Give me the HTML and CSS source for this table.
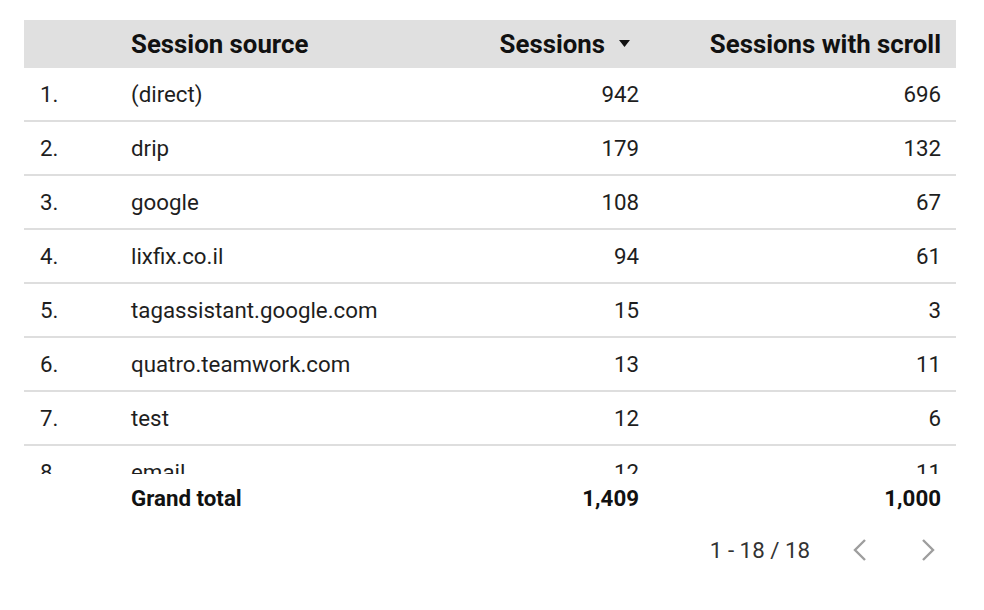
FILE: index.html
```html
<!DOCTYPE html>
<html>
<head>
<meta charset="utf-8">
<link rel="stylesheet" href="styles.css">
</head>
<body>
<div class="table">
  <div class="row head">
    <div class="c idx"></div>
    <div class="c src">Session source</div>
    <div class="c num s1">Sessions <svg class="sort" width="11" height="7" viewBox="0 0 11 7"><path d="M0 0H11L5.5 7Z" fill="#111"/></svg></div>
    <div class="c num s2">Sessions with scroll</div>
  </div>
  <div class="body">
    <div class="row"><div class="c idx">1.</div><div class="c src">(direct)</div><div class="c num s1">942</div><div class="c num s2">696</div></div>
    <div class="row"><div class="c idx">2.</div><div class="c src">drip</div><div class="c num s1">179</div><div class="c num s2">132</div></div>
    <div class="row"><div class="c idx">3.</div><div class="c src">google</div><div class="c num s1">108</div><div class="c num s2">67</div></div>
    <div class="row"><div class="c idx">4.</div><div class="c src">lixfix.co.il</div><div class="c num s1">94</div><div class="c num s2">61</div></div>
    <div class="row"><div class="c idx">5.</div><div class="c src">tagassistant.google.com</div><div class="c num s1">15</div><div class="c num s2">3</div></div>
    <div class="row"><div class="c idx">6.</div><div class="c src">quatro.teamwork.com</div><div class="c num s1">13</div><div class="c num s2">11</div></div>
    <div class="row"><div class="c idx">7.</div><div class="c src">test</div><div class="c num s1">12</div><div class="c num s2">6</div></div>
    <div class="row"><div class="c idx">8.</div><div class="c src">email</div><div class="c num s1">12</div><div class="c num s2">11</div></div>
  </div>
  <div class="row total">
    <div class="c idx"></div>
    <div class="c src">Grand total</div>
    <div class="c num s1">1,409</div>
    <div class="c num s2">1,000</div>
  </div>
  <div class="pager">
    <span class="range">1 - 18 / 18</span>
    <svg class="chev" width="16" height="24" viewBox="0 0 16 24"><path d="M13 2L3 12L13 22" fill="none" stroke="#9e9e9e" stroke-width="2.4"/></svg>
    <svg class="chev" width="16" height="24" viewBox="0 0 16 24"><path d="M3 2L13 12L3 22" fill="none" stroke="#9e9e9e" stroke-width="2.4"/></svg>
  </div>
</div>
</body>
</html>
```
FILE: styles.css
```css
html, body {
  margin: 0;
  padding: 0;
  background: #fff;
}
body {
  font-family: Roboto, "Liberation Sans", sans-serif;
  color: #1e1e1e;
  font-size: 22.3px;
}
.table {
  margin: 20px 28px 0 24px;
  width: 932px;
}
.row {
  display: grid;
  grid-template-columns: 107px 320px 188px 317px;
  align-items: center;
}
.c {
  white-space: nowrap;
}
.idx {
  padding-left: 16px;
}
.num {
  text-align: right;
}
.s2 {
  padding-right: 15px;
}
.head {
  height: 48px;
  background: #e0e0e0;
  font-weight: 700;
  font-size: 25.8px;
  color: #111;
}
.head .s1 {
  display: flex;
  justify-content: flex-end;
  align-items: center;
  gap: 14px;
  padding-right: 9px;
}
.sort {
  margin-top: -2px;
}
.body {
  height: 406px;
  overflow: hidden;
}
.body .row {
  height: 52px;
  border-bottom: 2px solid #dedede;
}
.total {
  height: 48px;
  font-weight: 700;
  color: #111;
}
.pager {
  display: flex;
  justify-content: flex-end;
  align-items: center;
  height: 56px;
  padding-right: 20px;
  color: #333;
}
.range {
  margin-right: 42px;
}
.chev + .chev {
  margin-left: 52px;
}
```
